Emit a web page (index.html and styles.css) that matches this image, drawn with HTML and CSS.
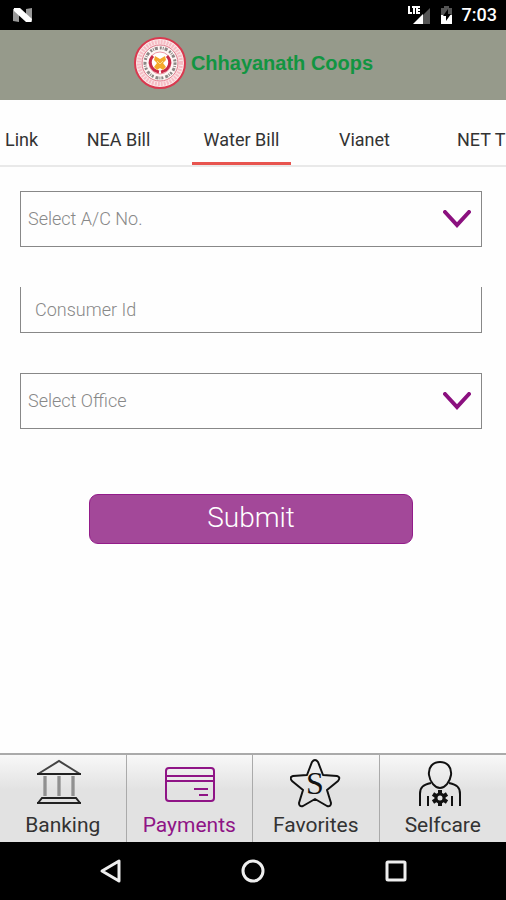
FILE: index.html
```html
<!DOCTYPE html>
<html lang="en">
<head>
    <meta charset="UTF-8">
    <meta name="viewport" content="width=device-width, initial-scale=1.0">
    <title>Chhayanath Coops</title>
    <link rel="stylesheet" href="styles.css">
</head>
<body>

    <div class="status-bar">
        <svg width="20" height="16" viewBox="0 0 20 16">
            <path d="M0 2l6-1v14l-6-1zM13 2l6-1v14l-6-1z" fill="#999"/>
            <path d="M1 1h6l12 11-1 3h-5L1 4z" fill="#fff"/>
        </svg>
        <div class="status-icons">
            <svg width="24" height="20" viewBox="0 0 24 20">
                <path d="M15 10l7-7v16h-7z" fill="#555"/>
                <path d="M5 19L15 9v10z" fill="#fff"/>
                <path d="M1 1v7h3M4 2h4M6 2v7M12 2H9v6h3M9 5h3" fill="none" stroke="#fff" stroke-width="2"/>
            </svg>
            <svg width="14" height="20" viewBox="0 0 14 20">
                <path d="M1 3h3V1h5v2h3v8H1z" fill="#555"/>
                <path d="M1 10h11v9H1z" fill="#fff"/>
                <path d="M8 4L3 11h3v5l5-7H8z" fill="#000"/>
            </svg>
            <span class="clock">7:03</span>
        </div>
    </div>

    <header>
        <svg class="logo" width="54" height="54" viewBox="0 0 54 54">
            <circle cx="27" cy="27" r="25" fill="#fbe9e9" stroke="#d9394f" stroke-width="2"/>
            <circle cx="27" cy="27" r="21" fill="none" stroke="#f6bcc4" stroke-width="4" stroke-dasharray="2 1"/>
            <circle cx="27" cy="27" r="18" fill="#fdf6f4" stroke="#e0798a"/>
            <circle cx="27" cy="27" r="15" fill="none" stroke="#8c8685" stroke-width="3" stroke-dasharray="2 1 1 1 3 2"/>
            <circle cx="27" cy="27" r="11" fill="#fff" stroke="#eb9aa6"/>
            <path d="M20 20c-5 5-3 14 6 16M34 20c5 5 3 14-6 16" fill="none" stroke="#c92a48" stroke-width="3"/>
            <path d="M22 20l5 3 5-3 1 4-3 3 3 4-3 3-3-2-3 2-3-3 3-4-3-3z" fill="#f4a92c"/>
            <path d="M24 25l3 3 3-3" fill="none" stroke="#fbd98b"/>
        </svg>
        <h1>Chhayanath Coops</h1>
    </header>

    <nav class="tabs">
        <a class="first" href="#">Link</a>
        <a href="#">NEA Bill</a>
        <a class="active" href="#">Water Bill</a>
        <a href="#">Vianet</a>
        <a class="last" href="#">NET T</a>
    </nav>

    <main>
        <form>
            <div class="dropdown">
                <select aria-label="Select A/C No.">
                    <option>Select A/C No.</option>
                </select>
                <svg width="28" height="18" viewBox="0 0 28 18">
                    <path d="M2 2l12 13L26 2" fill="none" stroke="#8b107f" stroke-width="4" stroke-linecap="round"/>
                </svg>
            </div>
            <input class="consumer" type="text" placeholder="Consumer Id" aria-label="Consumer Id">
            <div class="dropdown">
                <select aria-label="Select Office">
                    <option>Select Office</option>
                </select>
                <svg width="28" height="18" viewBox="0 0 28 18">
                    <path d="M2 2l12 13L26 2" fill="none" stroke="#8b107f" stroke-width="4" stroke-linecap="round"/>
                </svg>
            </div>
            <button class="submit" type="button">Submit</button>
        </form>
    </main>

    <nav class="bottom-nav">
        <a href="#">
            <svg width="52" height="50" viewBox="0 0 52 50" fill="none" stroke="#222">
                <path d="M1 16L22 3l21 13" stroke="#444" stroke-width="2"/>
                <path d="M0 16h44M0 45h44" stroke-width="2"/>
                <path d="M1 45l4-5h34l4 5" stroke-width="2"/>
                <path d="M8 18v20M22 18v20M36 18v20" stroke="#777" stroke-width="3"/>
                <path d="M8 18v20M22 18v20M36 18v20" stroke="#aaa"/>
            </svg>
            <span>Banking</span>
        </a>
        <a class="current" href="#">
            <svg width="52" height="50" viewBox="0 0 52 50" fill="none" stroke="#8f1486" stroke-width="2">
                <rect x="3" y="10" width="48" height="33" rx="3"/>
                <path d="M3 18h48M3 23h48M31 31h14M36 37h9"/>
            </svg>
            <span>Payments</span>
        </a>
        <a href="#">
            <svg width="52" height="50" viewBox="0 0 52 50">
                <path d="M22 4q3-4 6 0l5 13 14 1q4 1 1 5L37 32l4 13q0 4-4 3l-12-7-12 7q-4 1-4-3l4-13L2 23q-3-4 1-5l14-1z" fill="none" stroke="#111" stroke-width="2" stroke-linejoin="round"/>
                <text class="star-letter" x="25" y="36" text-anchor="middle">S</text>
            </svg>
            <span>Favorites</span>
        </a>
        <a href="#">
            <svg width="52" height="50" viewBox="0 0 52 50" fill="none" stroke="#111" stroke-width="2">
                <path d="M23 4c-7 0-12 5-11 13 1 7 6 13 11 13s10-6 11-13c1-8-4-13-11-13z"/>
                <path d="M14 25C6 27 3 29 3 36v12M32 25c8 2 11 4 11 11v12"/>
                <path d="M11 38v10M35 38v10"/>
                <circle cx="23" cy="40" r="4" stroke-width="3"/>
                <path d="M23 32v4M23 44v4M16 36l3 2M27 42l3 2M16 44l3-2M27 38l3-2" stroke-width="4"/>
            </svg>
            <span>Selfcare</span>
        </a>
    </nav>

    <footer class="system-bar">
        <button type="button" aria-label="Back">
            <svg width="24" height="26" viewBox="0 0 24 26"><path d="M3 13L20 3v20z" fill="none" stroke="#eee" stroke-width="3" stroke-linejoin="round"/></svg>
        </button>
        <button type="button" aria-label="Home">
            <svg width="24" height="26" viewBox="0 0 24 26"><circle cx="12" cy="13" r="10" fill="none" stroke="#eee" stroke-width="3"/></svg>
        </button>
        <button type="button" aria-label="Recent apps">
            <svg width="24" height="26" viewBox="0 0 24 26"><rect x="4" y="4" width="18" height="18" rx="1" fill="none" stroke="#eee" stroke-width="3"/></svg>
        </button>
    </footer>

</body>
</html>
```

FILE: styles.css
```css
* {
    box-sizing: border-box;
}

body {
    display: flex;
    flex-direction: column;
    min-height: 100vh;
    margin: 0;
    font-family: Roboto, sans-serif;
    background: #fefefe;
    color: #333;
}

a {
    color: inherit;
    text-decoration: none;
}

.status-bar {
    display: flex;
    align-items: center;
    justify-content: space-between;
    height: 30px;
    padding: 0 9px 0 13px;
    background: #000;
}

.status-icons {
    display: flex;
    align-items: center;
    gap: 8px;
}

.clock {
    color: #fff;
    font-size: 18px;
    font-weight: 500;
    line-height: 30px;
}

header {
    display: flex;
    align-items: center;
    justify-content: center;
    gap: 4px;
    height: 70px;
    padding-bottom: 4px;
    background: #969a8b;
}

h1 {
    margin: 0;
    color: #129541;
    font-family: "Liberation Sans", Arial, sans-serif;
    font-size: 20px;
}

.tabs {
    display: grid;
    grid-template-columns: 57fr 123fr 123fr 123fr 80fr;
    height: 67px;
    padding-top: 18px;
    border-bottom: 2px solid #e9e9e9;
    overflow: hidden;
    font-size: 18px;
    line-height: 44px;
    text-align: center;
    white-space: nowrap;
}

.tabs a {
    min-width: 0;
}

.tabs .first {
    padding-left: 5px;
    text-align: left;
}

.tabs .last {
    padding-left: 31px;
    text-align: left;
}

.tabs .active {
    margin: 0 12px;
    border-bottom: 3px solid #e8544f;
}

main {
    flex: 1;
    padding: 24px 24px 24px 20px;
}

form {
    display: flex;
    flex-direction: column;
}

.dropdown {
    display: grid;
    align-items: center;
}

.dropdown select,
.dropdown svg {
    grid-area: 1 / 1;
}

.dropdown svg {
    justify-self: end;
    margin-right: 11px;
    pointer-events: none;
}

select,
.consumer {
    width: 100%;
    border: 1px solid #888;
    border-radius: 0;
    background: transparent;
    color: #888;
    font-family: inherit;
    font-size: 18px;
    font-weight: 300;
}

select {
    height: 56px;
    padding: 0 7px 2px;
    appearance: none;
}

.consumer {
    height: 46px;
    margin: 40px 0;
    padding: 0 14px;
    border-top: none;
}

.consumer::placeholder {
    color: #888;
}

.submit {
    align-self: center;
    width: 70%;
    height: 50px;
    margin-top: 65px;
    padding-bottom: 4px;
    border: 1px solid #931c8a;
    border-radius: 9px;
    background: #a34899;
    color: #fff;
    font-family: inherit;
    font-size: 28px;
    font-weight: 300;
}

.bottom-nav {
    display: grid;
    grid-template-columns: repeat(4, 1fr);
    border-top: 2px solid #aaa;
    background: linear-gradient(#f8f8f8, #e2e2e2 40%, #e2e2e2);
}

.bottom-nav a {
    display: flex;
    flex-direction: column;
    align-items: center;
    height: 87px;
    padding-top: 3px;
    border-right: 1px solid #aaa;
    font-size: 21px;
    line-height: 34px;
}

.bottom-nav a:last-child {
    border-right: none;
}

.bottom-nav .current {
    color: #8f1486;
}

.star-letter {
    font-family: "Liberation Serif", serif;
    font-size: 32px;
    fill: #111;
}

.system-bar {
    display: flex;
    align-items: center;
    justify-content: center;
    gap: 118px;
    height: 58px;
    background: #000;
}

.system-bar button {
    padding: 0;
    border: none;
    background: none;
    line-height: 0;
}
```
